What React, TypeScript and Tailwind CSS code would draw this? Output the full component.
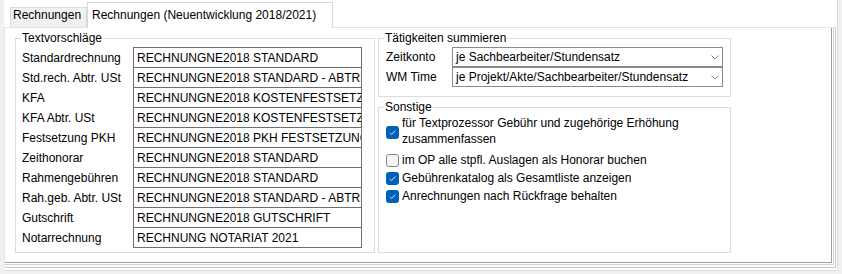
import React from "react";

const textRows: [string, string][] = [
  ["Standardrechnung", "RECHNUNGNE2018 STANDARD"],
  ["Std.rech. Abtr. USt", "RECHNUNGNE2018 STANDARD - ABTRETUNG"],
  ["KFA", "RECHNUNGNE2018 KOSTENFESTSETZUNG"],
  ["KFA Abtr. USt", "RECHNUNGNE2018 KOSTENFESTSETZUNG - ABTRETUNG"],
  ["Festsetzung PKH", "RECHNUNGNE2018 PKH FESTSETZUNG"],
  ["Zeithonorar", "RECHNUNGNE2018 STANDARD"],
  ["Rahmengebühren", "RECHNUNGNE2018 STANDARD"],
  ["Rah.geb. Abtr. USt", "RECHNUNGNE2018 STANDARD - ABTRETUNG"],
  ["Gutschrift", "RECHNUNGNE2018 GUTSCHRIFT"],
  ["Notarrechnung", "RECHNUNG NOTARIAT 2021"],
];

function Chevron() {
  return (
    <svg width="8" height="5" viewBox="0 0 8 5" className="shrink-0">
      <polyline points="0.5,0.5 4,4 7.5,0.5" fill="none" stroke="#8a8a8a" strokeWidth="1" />
    </svg>
  );
}

function Combo({ label, value }: { label: string; value: string }) {
  return (
    <div className="flex items-center h-[20px]">
      <div className="w-[66px] whitespace-nowrap">{label}</div>
      <div className="w-[271px] h-[20px] border border-[#8a8a8a] bg-white flex items-center justify-between pl-[3px] pr-[3px]">
        <span className="whitespace-nowrap">{value}</span>
        <Chevron />
      </div>
    </div>
  );
}

function Check({ checked }: { checked: boolean }) {
  if (!checked) {
    return <div className="w-[13px] h-[13px] shrink-0 rounded-[3px] border border-[#858585] bg-[#f6f6f6]" />;
  }
  return (
    <div className="w-[13px] h-[13px] shrink-0 rounded-[3px] bg-[#005fb8] flex items-center justify-center">
      <svg width="9" height="9" viewBox="0 0 9 9">
        <polyline points="1.8,4.8 3.6,6.6 7.2,2.6" fill="none" stroke="#cfe3f7" strokeWidth="1" />
      </svg>
    </div>
  );
}

export default function App() {
  return (
    <div className="w-[842px] h-[274px] bg-[#f0f0f0] pl-[4px] pr-[4px] pb-[3px] font-['Liberation_Sans',Arial,sans-serif] text-[12px] text-black leading-[14px]">
      <div className="h-full bg-white border-r border-b border-[#dcdcdc] flex flex-col">
        {/* Tabs */}
        <div className="h-[27px] shrink-0 flex items-end pl-[6px]">
          <div className="h-[20px] w-[77px] pl-[2px] bg-[#f0f0f0] border border-b-0 border-[#d9d9d9] flex items-start whitespace-nowrap">
            Rechnungen
          </div>
          <div className="relative z-10 -mb-px h-[26px] w-[246px] pl-[4px] pt-[5px] border border-b-0 border-[#d9d9d9] bg-white flex items-start whitespace-nowrap">
            Rechnungen (Neuentwicklung 2018/2021)
          </div>
        </div>

        {/* Page */}
        <div className="flex-1 mr-[1px] mb-[2px] border border-t-[#e3e3e3] border-l-[#e3e3e3] border-r-[#c8c8c8] border-b-[#c8c8c8] pr-[1px] pb-[2px]">
          <div className="h-full border-r border-b border-[#d4d4d4] pr-[1px] pb-[1px]">
            <div className="h-full border-r border-b border-[#a0a0a0] flex gap-[3px] pl-[10px] pt-[3px]">
              {/* Textvorschläge */}
              <fieldset className="w-[360px] h-[222px] border border-[#dcdcdc]">
                <legend className="ml-[5px] px-[1px] leading-[14px]">Textvorschläge</legend>
                <div className="flex pl-[6px] pt-[2px]">
                  <div className="w-[111px] pt-[1px]">
                    {textRows.map(([label]) => (
                      <div key={label} className="h-[20px] flex items-center whitespace-nowrap">
                        {label}
                      </div>
                    ))}
                  </div>
                  <div className="w-[229px] border-x border-t border-[#6f6f6f]">
                    {textRows.map(([label, value]) => (
                      <div
                        key={label}
                        className="h-[20px] border-b border-[#6f6f6f] pl-[3px] flex items-center overflow-hidden whitespace-nowrap"
                      >
                        {value}
                      </div>
                    ))}
                  </div>
                </div>
              </fieldset>

              <div className="w-[353px] flex flex-col">
                {/* Tätigkeiten summieren */}
                <fieldset className="h-[66px] border border-[#dcdcdc]">
                  <legend className="ml-[5px] px-[1px] leading-[14px]">Tätigkeiten summieren</legend>
                  <div className="pl-[7px] pt-[2px]">
                    <Combo label="Zeitkonto" value="je Sachbearbeiter/Stundensatz" />
                    <Combo label="WM Time" value="je Projekt/Akte/Sachbearbeiter/Stundensatz" />
                  </div>
                </fieldset>

                {/* Sonstige */}
                <fieldset className="mt-[3px] h-[153px] border border-[#dcdcdc]">
                  <legend className="ml-[5px] px-[1px] leading-[14px]">Sonstige</legend>
                  <div className="pl-[7px] pr-[8px]">
                    <div className="h-[37px] flex items-start gap-[3px]">
                      <div className="mt-[12px]">
                        <Check checked />
                      </div>
                      <div className="mt-[1px] leading-[16px]">
                        für Textprozessor Gebühr und zugehörige Erhöhung zusammenfassen
                      </div>
                    </div>
                    <div className="h-[18px] flex items-center gap-[3px]">
                      <Check checked={false} />
                      <span>im OP alle stpfl. Auslagen als Honorar buchen</span>
                    </div>
                    <div className="h-[18px] flex items-center gap-[3px]">
                      <Check checked />
                      <span>Gebührenkatalog als Gesamtliste anzeigen</span>
                    </div>
                    <div className="h-[18px] flex items-center gap-[3px]">
                      <Check checked />
                      <span>Anrechnungen nach Rückfrage behalten</span>
                    </div>
                  </div>
                </fieldset>
              </div>
            </div>
          </div>
        </div>
      </div>
    </div>
  );
}
